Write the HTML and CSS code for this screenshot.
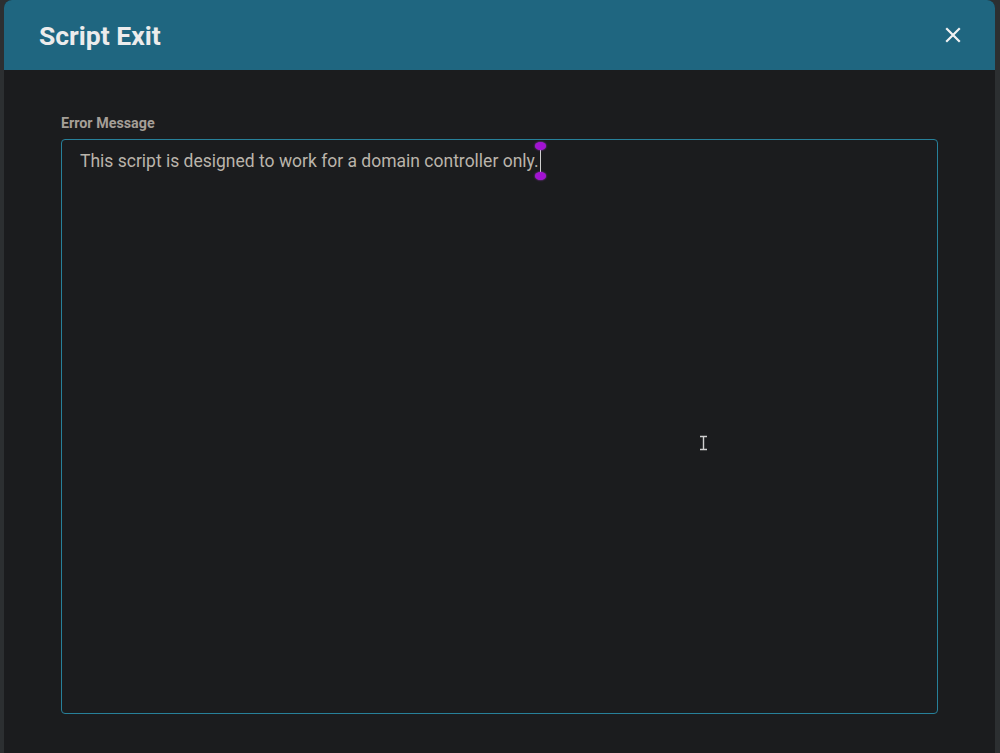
FILE: index.html
```html
<!DOCTYPE html>
<html>
<head>
<meta charset="utf-8">
<link rel="stylesheet" href="styles.css">
</head>
<body>
<div class="backdrop">
  <div class="modal">
    <div class="modal-header">
      <h1 class="modal-title">Script Exit</h1>
      <button class="close-btn" aria-label="Close">
        <svg width="16" height="16" viewBox="0 0 16 16"><path d="M2 2 L14 14 M14 2 L2 14" stroke="#f2f2f2" stroke-width="2.2" stroke-linecap="square"/></svg>
      </button>
    </div>
    <div class="modal-body">
      <label class="field-label">Error Message</label>
      <div class="textarea">
        <span class="text">This script is designed to work for a domain controller only.<span class="caret"><span class="handle top"></span><span class="handle bottom"></span></span></span>
        <span class="ibeam">
          <svg width="9" height="16" viewBox="0 0 9 16"><path d="M1 1.5 H8 M4.5 1.5 V14.5 M1 14.5 H8" stroke="#d0d0d0" stroke-width="1.4" fill="none"/></svg>
        </span>
      </div>
    </div>
  </div>
</div>
</body>
</html>
```

FILE: styles.css
```css
html, body {
  margin: 0;
  padding: 0;
  height: 100%;
}
body {
  background: #2c2f31;
  font-family: Roboto, "Liberation Sans", sans-serif;
  overflow: hidden;
}
.backdrop {
  height: 753px;
  padding: 0 5px 0 4px;
  box-sizing: border-box;
}
.modal {
  height: 100%;
  background: #1b1c1e;
  border-radius: 8px 8px 0 0;
  display: flex;
  flex-direction: column;
  overflow: hidden;
}
.modal-header {
  height: 70px;
  flex: none;
  background: #1f6680;
  display: flex;
  align-items: center;
  justify-content: space-between;
  padding: 0 34px 0 35px;
  box-sizing: border-box;
}
.modal-title {
  margin: 0;
  font-size: 26.5px;
  font-weight: 700;
  color: #ececec;
  padding-top: 1px;
}
.close-btn {
  background: none;
  border: 0;
  padding: 0;
  width: 16px;
  height: 16px;
  display: flex;
}
.modal-body {
  padding: 45px 57px 39px 57px;
  display: flex;
  flex-direction: column;
  flex: 1;
}
.field-label {
  font-size: 14.3px;
  font-weight: 700;
  color: #a59f97;
  line-height: 16px;
  margin-bottom: 8px;
}
.textarea {
  position: relative;
  flex: 1;
  border: 1px solid #27809a;
  border-radius: 4px;
  padding: 9px 18px;
  box-sizing: border-box;
}
.text {
  font-size: 17.5px;
  line-height: 24px;
  color: #bab4ab;
}
.caret {
  position: relative;
  display: inline-block;
  width: 1px;
  height: 24px;
  background: #cfcfcf;
  vertical-align: -6px;
  margin-left: 1px;
}
.handle {
  position: absolute;
  left: -5px;
  width: 11px;
  height: 8px;
  background: #a212d2;
  border-radius: 50%;
  box-shadow: 0 0 2px #b040e0;
}
.handle.top { top: -7px; }
.handle.bottom { bottom: -7px; }
.ibeam {
  position: absolute;
  left: 637px;
  top: 295px;
  display: flex;
}
```
